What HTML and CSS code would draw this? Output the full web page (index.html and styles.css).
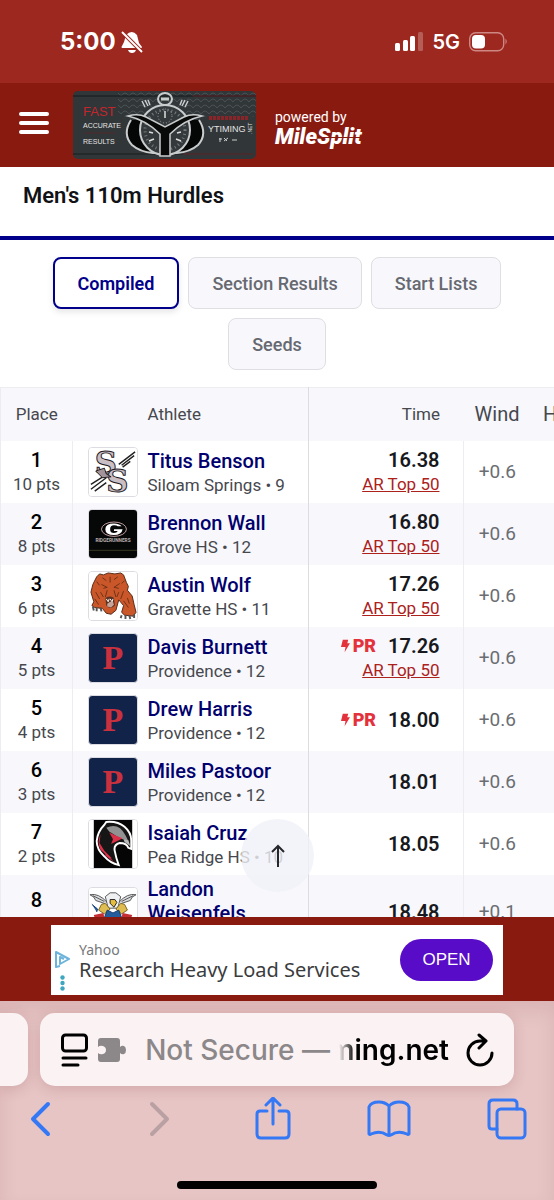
FILE: index.html
```html
<!DOCTYPE html>
<html lang="en">
<head>
    <meta charset="UTF-8">
    <meta name="viewport" content="width=device-width, initial-scale=1.0">
    <title>Men's 110m Hurdles</title>
    <link rel="stylesheet" href="styles.css">
</head>
<body>

    <div class="status-bar">
        <div class="status-left">
            <span class="clock">5:00</span>
            <svg width="22" height="22" viewBox="0 0 22 22" fill="#fff">
                <path d="M5 4q6-6 11 0l2 8 3 4q0 1-1 1H1q-1-1 0-2l2-4zM7 19h8q-1 3-4 3t-4-3z"/>
                <path d="M1 1l20 20" stroke="#9c2820" stroke-width="4"/>
                <path d="M1 1l20 20" stroke="#fff" stroke-width="2"/>
            </svg>
        </div>
        <div class="status-right">
            <svg width="28" height="20" viewBox="0 0 28 20" fill="#fff">
                <rect y="11" width="5" height="8" rx="1.500"/>
                <rect x="8" y="8" width="5" height="11" rx="1.500"/>
                <rect x="15" y="4" width="5" height="15" rx="1.500"/>
                <rect x="23" y="0" width="5" height="19" rx="1.500" opacity=".25"/>
            </svg>
            <span class="network">5G</span>
            <svg width="39" height="20" viewBox="0 0 39 20">
                <rect x=".7" y=".7" width="34" height="18" rx="6" fill="none" stroke="#cf8783" stroke-width="1.400"/>
                <rect x="3" y="3" width="13" height="13.500" rx="4" fill="#fff"/>
                <path d="M36.500 6.500q2.500 3 0 6z" fill="#cf8783"/>
            </svg>
        </div>
    </div>

    <header>
        <button class="menu-btn" aria-label="Menu"><span></span><span></span><span></span></button>
        <a href="#" class="banner" aria-label="YTiming">
            <svg width="183" height="68" viewBox="0 0 183 68">
                <defs>
                    <pattern id="mesh" width="8" height="6" patternUnits="userSpaceOnUse">
                        <path d="M0 5q4-6 8 0" fill="none" stroke="#4a5153"/>
                    </pattern>
                </defs>
                <rect width="183" height="68" rx="5" fill="#313638"/>
                <rect x="45" y="0" width="138" height="26" fill="url(#mesh)"/>
                <path d="M0 5h183" stroke="#15181a"/>
                <path d="M120 5h63M110 63h70" stroke="#5e2327"/>
                <path d="M0 63h110" stroke="#191c1d"/>
                <g font-family="Liberation Sans" fill="#e4e4e4">
                    <text x="10" y="25" font-size="13" fill="#c3272d">FAST</text>
                    <text x="10" y="37" font-size="7">ACCURATE</text>
                    <text x="10" y="53" font-size="7">RESULTS</text>
                    <text x="135" y="41" font-size="9">YTIMING</text>
                    <text x="179" y="43" font-size="5" transform="rotate(-90 179 43)">.NET</text>
                </g>
                <path d="M136 27h39" stroke="#8c2329" stroke-width="4" stroke-dasharray="3 1"/>
                <path d="M12 42h30" stroke="#54282b"/>
                <path d="M147 47v4M146 48h3M151 50l4-3M151 47l3 3M159 49h5" stroke="#ccc"/>
                <!-- stopwatch -->
                <g fill="none" stroke="#c9cccd">
                    <ellipse cx="92" cy="8" rx="7" ry="6" stroke-width="2"/>
                    <path d="M88 8h8" stroke-width="3"/>
                    <path d="M69 10l3 6M72 9l3 6M75 9l2 5M115 10l-3 6M112 9l-3 6M109 9l-2 5" stroke-width="1.500"/>
                    <path d="M58 29q-9 14 1 25 8 7 21 8l24 0q13-1 21-8 10-11 1-25" fill="#050606" stroke-width="2"/>
                    <circle cx="92" cy="39" r="25" fill="#34393b" stroke-width="2"/>
                    <circle cx="92" cy="39" r="20" stroke="#777c7f" stroke-width="3" stroke-dasharray="1 3"/>
                    <circle cx="92" cy="25" r="7" stroke="#a5a9aa" stroke-dasharray="1 2"/>
                    <path d="M92 20v7M76 41l4 1M104 42l4-1M76 50l5-2M108 50l-5-2" stroke="#ddd" stroke-width="1.500"/>
                    <path d="M55 25q10-3 18 1l19 10 19-10q8-4 18-1-18 4-32 18v22H87V43Q73 29 55 25z" fill="#080909" stroke-width="1.500"/>
                </g>
            </svg>
        </a>
        <div class="powered">
            <span>powered by</span>
            <a href="#" class="milesplit">MileSplit</a>
        </div>
    </header>

    <section class="event-title">
        <h1>Men's 110m Hurdles</h1>
    </section>

    <nav class="tabs">
        <button class="tab active">Compiled</button>
        <button class="tab">Section Results</button>
        <button class="tab">Start Lists</button>
        <button class="tab">Seeds</button>
    </nav>

    <main class="results">
        <table>
            <colgroup>
                <col class="col-place">
                <col class="col-logo">
                <col>
                <col class="col-time">
                <col class="col-wind">
                <col class="col-heat">
            </colgroup>
            <thead>
                <tr>
                    <th>Place</th>
                    <th></th>
                    <th class="athlete">Athlete</th>
                    <th class="time">Time</th>
                    <th class="wind">Wind</th>
                    <th class="heat">Heat</th>
                </tr>
            </thead>
            <tbody>
                <tr>
                    <td class="place"><b>1</b><span>10 pts</span></td>
                    <td class="logo">
                        <svg viewBox="0 0 50 50">
                            <rect width="50" height="50" fill="#fff"/>
                            <path d="M31 17l17-13M34 18l13-10M35 20l8-6M2 38l14-9M2 43l16-12M6 45l12-9" stroke="#222" stroke-width="1.500"/>
                            <g class="siloam-s">
                                <text x="6" y="27">S</text>
                                <text x="18" y="46">S</text>
                            </g>
                            <path d="M7 24l9-3 2 6 5 3-9 1z" fill="#a3949c" stroke="#1c181b"/>
                        </svg>
                    </td>
                    <td class="athlete"><a href="#">Titus Benson</a><span>Siloam Springs • 9</span></td>
                    <td class="time"><b>16.38</b><a href="#">AR Top 50</a></td>
                    <td class="wind">+0.6</td>
                    <td></td>
                </tr>
                <tr>
                    <td class="place"><b>2</b><span>8 pts</span></td>
                    <td class="logo">
                        <svg viewBox="0 0 50 50">
                            <rect width="50" height="50" fill="#060707"/>
                            <ellipse cx="26" cy="20" rx="13" ry="7.500" fill="none" stroke="#c9a4a4"/>
                            <path d="M34 17q-3-3-8-3-9 0-9 6t9 6q8 0 9-6h-9v2h4q-1 2-4 2-4 0-4-4t4-4q3 0 4 1z" fill="#fff"/>
                            <text x="25" y="33" text-anchor="middle" font-size="5" font-weight="bold" fill="#b9b0b0">RIDGERUNNERS</text>
                            <path d="M0 42h50" stroke="#3c3a24"/>
                        </svg>
                    </td>
                    <td class="athlete"><a href="#">Brennon Wall</a><span>Grove HS • 12</span></td>
                    <td class="time"><b>16.80</b><a href="#">AR Top 50</a></td>
                    <td class="wind">+0.6</td>
                    <td></td>
                </tr>
                <tr>
                    <td class="place"><b>3</b><span>6 pts</span></td>
                    <td class="logo">
                        <svg viewBox="0 0 50 50">
                            <rect width="50" height="50" fill="#fff"/>
                            <path d="M8 5l3-3 4 1 5-2 7 1 6-1 3 2 3 8 2 4-1 4 5 6 2 9 2 8-3 4-9-1-3-3 2-7-5-6-3 11-5 4-5-1-4-5-8-1-3-2 2-4-3-10 2-8z" fill="#c9572a" stroke="#542816"/>
                            <path d="M13 13l6 3-4 1M32 12l-6 4 5 1M7 21l4 7M36 20l-3 8M19 19l-2 7M26 19l2 7M8 10l3 4M37 9l-3 3M14 6l4 3M30 5l-4 3M36 30l5 7M6 28l4 6M22 5v6M12 21l3 5M31 21l-2 5M40 27l2 6" stroke="#6d3016" fill="none"/>
                            <path d="M17 27q5-3 9 0l1 8q-5 5-9 0z" fill="#5b3223"/>
                            <path d="M19 33l3-2 3 0 1 3-3 3-4-1z" fill="#c7a49a"/>
                            <path d="M18 28l2 3 1-3M25 28l-1 3-2-3" stroke="#fff" fill="none"/>
                            <path d="M4 36l1 4M8 37l0 4M12 37l1 4M34 45l-1 3M38 45v4M42 45l1 4M47 44v4" stroke="#555" stroke-width="2"/>
                        </svg>
                    </td>
                    <td class="athlete"><a href="#">Austin Wolf</a><span>Gravette HS • 11</span></td>
                    <td class="time"><b>17.26</b><a href="#">AR Top 50</a></td>
                    <td class="wind">+0.6</td>
                    <td></td>
                </tr>
                <tr>
                    <td class="place"><b>4</b><span>5 pts</span></td>
                    <td class="logo"><div class="providence">P</div></td>
                    <td class="athlete"><a href="#">Davis Burnett</a><span>Providence • 12</span></td>
                    <td class="time"><b><span class="pr"><svg width="9" height="14" viewBox="0 0 10 14"><path d="M2 0h6L7 4h3L4 14l1-6H0z"/></svg>PR</span>17.26</b><a href="#">AR Top 50</a></td>
                    <td class="wind">+0.6</td>
                    <td></td>
                </tr>
                <tr>
                    <td class="place"><b>5</b><span>4 pts</span></td>
                    <td class="logo"><div class="providence">P</div></td>
                    <td class="athlete"><a href="#">Drew Harris</a><span>Providence • 12</span></td>
                    <td class="time"><b><span class="pr"><svg width="9" height="14" viewBox="0 0 10 14"><path d="M2 0h6L7 4h3L4 14l1-6H0z"/></svg>PR</span>18.00</b></td>
                    <td class="wind">+0.6</td>
                    <td></td>
                </tr>
                <tr>
                    <td class="place"><b>6</b><span>3 pts</span></td>
                    <td class="logo"><div class="providence">P</div></td>
                    <td class="athlete"><a href="#">Miles Pastoor</a><span>Providence • 12</span></td>
                    <td class="time"><b>18.01</b></td>
                    <td class="wind">+0.6</td>
                    <td></td>
                </tr>
                <tr>
                    <td class="place"><b>7</b><span>2 pts</span></td>
                    <td class="logo">
                        <svg viewBox="0 0 50 50">
                            <rect width="50" height="50" fill="#fff"/>
                            <rect x="5" width="40" height="50" fill="#050505"/>
                            <path d="M16 5l2-3q12-1 19 5 7 6 7 14v9l-3-1q-2-5-9-5-7 2-5 9 1 6 4 14-9-2-15-9Q8 31 8 22q1-10 8-17z" fill="#161616" stroke="#fff" stroke-width="2"/>
                            <path d="M18 8q13-6 20 8l3 6-9-3-11-7z" fill="#929292"/>
                            <path d="M21 13l6 3 8 3-4 2-8 4 2-5zM12 15l-1 9 5 8 8 8-3-1-9-8q-4-8 0-16zM17 33l9 11-9-7z" fill="#dc3048"/>
                            <path d="M36 20l5 1 2 6-6-4z" fill="#bbb"/>
                        </svg>
                    </td>
                    <td class="athlete"><a href="#">Isaiah Cruz</a><span>Pea Ridge HS • 10</span></td>
                    <td class="time"><b>18.05</b></td>
                    <td class="wind">+0.6</td>
                    <td></td>
                </tr>
                <tr>
                    <td class="place"><b>8</b><span>1 pt</span></td>
                    <td class="logo">
                        <svg viewBox="0 0 50 50">
                            <rect width="50" height="50" fill="#fff"/>
                            <path d="M19 15Q10 5 1 7q5 2 6 6l9 3M31 15Q40 5 49 7q-5 2-6 6l-9 3M4 8l12 6M46 8l-12 6" fill="#d9dcdf" stroke="#555"/>
                            <path d="M17 9l5-4h6l5 4-3 12H20z" fill="#eef0f2" stroke="#555"/>
                            <path d="M22 12h5l2 3-3 5-4-4z" fill="#e6bd3d" stroke="#222"/>
                            <path d="M13 17l4-1 5 6-6 5-6-4zM37 17l-4-1-5 6 6 5 6-4z" fill="#e0bd50" stroke="#776126"/>
                            <path d="M19 23l6 3 6-3 3 8-9 3-9-3zM3 17l6 5-1 3" fill="#245d9d" stroke="#183d70"/>
                            <path d="M5 28l10-2 2 9h16l2-9 10 2-3 10H8z" fill="#c52e35"/>
                        </svg>
                    </td>
                    <td class="athlete"><a href="#">Landon Weisenfels</a><span>Bentonville • 11</span></td>
                    <td class="time"><b>18.48</b></td>
                    <td class="wind">+0.1</td>
                    <td></td>
                </tr>
            </tbody>
        </table>
        <button class="to-top" aria-label="Back to top">
            <svg width="16" height="24" viewBox="0 0 16 24" fill="none" stroke="#25272c" stroke-width="2">
                <path d="M8 23V2M2 8l6-6 6 6"/>
            </svg>
        </button>
    </main>

    <aside class="ad-bar">
        <div class="ad">
            <div class="ad-marks">
                <svg width="15" height="17" viewBox="0 0 15 17" fill="none" stroke="#6cb4da" stroke-width="2" stroke-linejoin="round">
                    <path d="M5 15l-4 1V1l13 7-9 5V6l4 2"/>
                </svg>
                <svg width="5" height="16" viewBox="0 0 5 16" fill="#3ea6bf">
                    <circle cx="2.500" cy="2.500" r="2.200"/>
                    <circle cx="2.500" cy="8" r="2.200"/>
                    <circle cx="2.500" cy="13.500" r="2.200"/>
                </svg>
            </div>
            <div class="ad-text">
                <span>Yahoo</span>
                <p>Research Heavy Load Services</p>
            </div>
            <button class="ad-open">OPEN</button>
        </div>
    </aside>

    <footer class="browser-bar">
        <div class="address-row">
            <div class="prev-tab"></div>
            <button class="address">
                <svg width="27" height="34" viewBox="0 0 27 34" fill="none" stroke="#000" stroke-width="3" stroke-linecap="round">
                    <rect x="1.500" y="2" width="24" height="16" rx="3"/>
                    <path d="M2 25h23M2 32h15"/>
                </svg>
                <svg class="puzzle" width="28" height="24" viewBox="0 0 28 24" fill="#8c8789">
                    <path d="M3 0h16q3 0 3 3v6q2-2 4-1 2 1 2 4t-2 4q-2 1-4-1v6q0 3-3 3H3q-3 0-3-3v-6q2 2 5 1 3-1 3-4t-3-4Q2 7 0 9V3q0-3 3-3z"/>
                </svg>
                <span class="insecure">Not Secure —</span>
                <span class="domain">ming.net</span>
                <svg class="reload" width="28" height="34" viewBox="0 0 28 34" fill="none" stroke="#000" stroke-width="3" stroke-linecap="round" stroke-linejoin="round">
                    <path d="M26 20a12 12 0 1 1-12-12h5M13 2l7 6-7 7"/>
                </svg>
            </button>
        </div>
        <div class="toolbar">
            <button aria-label="Back"><svg width="40" height="44" viewBox="0 0 40 44"><path d="M28 7L13 22l15 15" stroke-width="4"/></svg></button>
            <button aria-label="Forward" class="disabled"><svg width="40" height="44" viewBox="0 0 40 44"><path d="M16 7l15 15-15 15" stroke-width="4"/></svg></button>
            <button aria-label="Share"><svg width="40" height="44" viewBox="0 0 40 44"><path d="M15 14H8q-3 0-3 3v20q0 4 4 4h24q4 0 4-4V17q0-3-3-3h-7M21 27V2M14 8l7-7 7 7"/></svg></button>
            <button aria-label="Bookmarks"><svg width="44" height="44" viewBox="0 0 44 44"><path d="M22 9q-4-4-10-4-8 0-10 5v27q1 1 2 0 9-4 16 1 2 1 4 0 7-5 16-1 1 1 2 0V10q-2-5-10-5-6 0-10 4v29"/></svg></button>
            <button aria-label="Tabs"><svg width="40" height="44" viewBox="0 0 40 44"><rect x="10" y="12" width="28" height="29" rx="4"/><path d="M10 32H5q-3 0-3-3V7q0-4 4-4h20q4 0 4 4v5"/></svg></button>
        </div>
        <div class="home-indicator"></div>
    </footer>

</body>
</html>
```
FILE: styles.css
```css
* {
    box-sizing: border-box;
}

body {
    font-family: Roboto, Arial, sans-serif;
    margin: 0;
    height: 100vh;
    display: flex;
    flex-direction: column;
    overflow: hidden;
    background-color: white;
}

button {
    font-family: inherit;
    border: none;
    background: none;
    padding: 0;
    cursor: pointer;
}

svg {
    display: block;
}

/* Status bar */
.status-bar {
    display: flex;
    justify-content: space-between;
    align-items: center;
    padding: 26px 46px 26px 60px;
    font-family: Inter, sans-serif;
    color: white;
    background-color: #9c2820;
}

.status-left {
    display: flex;
    align-items: center;
    gap: 5px;
}

.status-right {
    display: flex;
    align-items: center;
    gap: 9px;
}

.clock {
    font-size: 24px;
    font-weight: 700;
    line-height: 31px;
}

.network {
    font-size: 20px;
    font-weight: 600;
}

/* Site header */
header {
    display: flex;
    align-items: center;
    padding: 8px 19px;
    background-color: #891a10;
}

.menu-btn {
    display: flex;
    flex-direction: column;
    gap: 5px;
    width: 30px;
    margin-right: 24px;
    padding-bottom: 4px;
}

.menu-btn span {
    height: 4px;
    border-radius: 2px;
    background-color: white;
}

.banner {
    margin-right: 19px;
}

.powered {
    display: flex;
    flex-direction: column;
    color: white;
    font-size: 14px;
    line-height: 20px;
    padding-top: 4px;
}

.milesplit {
    position: relative;
    color: white;
    font-size: 22px;
    font-weight: 900;
    font-style: italic;
    text-decoration: none;
}

/* the cut through "Split" */
.milesplit::after {
    content: "";
    position: absolute;
    left: 50%;
    right: 0;
    top: 50%;
    height: 1px;
    background-color: #891a10;
}

.event-title {
    padding: 14px 23px 26px;
    border-bottom: 4px solid #00008b;
}

.event-title h1 {
    margin: 0;
    font-size: 22px;
    font-weight: 600;
    line-height: 29px;
    color: #111216;
}

/* Tabs */
.tabs {
    display: flex;
    flex-wrap: wrap;
    justify-content: center;
    gap: 9px;
    padding: 17px 50px;
}

.tab {
    height: 52px;
    padding: 0 23px;
    font-size: 18px;
    font-weight: 500;
    color: #666970;
    background-color: #f7f7fc;
    border: 1px solid #dfdfe3;
    border-radius: 8px;
}

.tab.active {
    font-weight: 600;
    color: #00008b;
    background-color: white;
    border: 2px solid #00008b;
    box-shadow: 0 3px 6px rgba(0, 0, 0, 0.1);
}

/* Results table */
.results {
    position: relative;
    flex: 1;
    min-height: 0;
    overflow: hidden;
}

table {
    width: calc(100% + 40px);
    table-layout: fixed;
    border-collapse: collapse;
    border-left: 1px solid #ececf1;
    color: #46484e;
}

.col-place { width: 72px; }
.col-logo { width: 75px; }
.col-time { width: 155px; }
.col-wind { width: 68px; }
.col-heat { width: 63px; }

th,
td {
    padding: 0;
    font-size: 17px;
    font-weight: 400;
    line-height: 24px;
    text-align: center;
}

thead tr {
    height: 53px;
    background-color: #f7f7fc;
    border-top: 1px solid #ececf1;
}

tbody tr {
    height: 62px;
}

tbody tr:nth-child(even) {
    background-color: #f7f7fc;
}

td b,
td span,
td a {
    display: block;
}

td b {
    font-size: 20px;
}

.place {
    border-right: 1px solid #ececf1;
}

.place b {
    font-weight: 500;
    color: black;
}

.logo svg,
.providence {
    width: 50px;
    height: 50px;
    margin-left: 15px;
    border: 1px solid #dcdce2;
    border-radius: 4px;
}

.siloam-s {
    font-family: "DejaVu Serif", serif;
    font-size: 32px;
    font-weight: bold;
    fill: #cbbfc6;
    stroke: #1c181b;
    stroke-width: 1px;
}

.providence {
    font-family: "Liberation Serif", serif;
    font-size: 34px;
    font-weight: bold;
    line-height: 48px;
    color: #c9313f;
    background-color: #112348;
}

.athlete {
    text-align: left;
    border-right: 1px solid #dcdce2;
}

td.athlete {
    padding-top: 2px;
}

.athlete a {
    font-size: 20px;
    font-weight: 500;
    color: #00006e;
    text-decoration: none;
}

.time {
    text-align: right;
    padding-right: 23px;
}

tbody .time {
    border-right: 1px solid #ececf1;
}

.time b {
    display: flex;
    justify-content: flex-end;
    align-items: center;
    gap: 12px;
    font-weight: 600;
    color: #17191d;
}

.time a {
    color: #ac211b;
}

.time .pr {
    display: flex;
    align-items: center;
    gap: 3px;
    font-size: 18px;
    font-weight: 900;
    color: #e3323b;
}

.pr svg {
    fill: #e3323b;
}

.wind,
.heat {
    font-size: 20px;
}

td.wind {
    font-size: 19px;
    color: #6b6d72;
}

.heat {
    text-align: left;
    padding-left: 12px;
}

.to-top {
    position: absolute;
    left: 50%;
    bottom: 25px;
    width: 73px;
    height: 73px;
    margin-left: -36px;
    display: flex;
    justify-content: center;
    align-items: center;
    border-radius: 50%;
    background-color: rgba(240, 241, 247, 0.8);
}

/* Ad */
.ad-bar {
    padding: 8px 51px 6px;
    background-color: #891a10;
}

.ad {
    display: flex;
    align-items: center;
    height: 70px;
    padding: 0 10px 0 4px;
    background-color: white;
}

.ad-marks {
    display: flex;
    flex-direction: column;
    align-items: center;
    gap: 7px;
    margin-right: 9px;
    padding-top: 22px;
}

.ad-text {
    flex: 1;
    font-family: "Noto Sans", sans-serif;
    color: #75777a;
    font-size: 14px;
    line-height: 20px;
}

.ad-text p {
    margin: 0;
    color: #3b3c3e;
    font-size: 20px;
    white-space: nowrap;
}

.ad-open {
    width: 93px;
    height: 42px;
    border-radius: 21px;
    font-family: "Liberation Sans", Arial, sans-serif;
    font-size: 17px;
    color: white;
    background-color: #580cc8;
}

/* Browser bar */
.browser-bar {
    padding: 12px 0 11px;
    background-color: #e7c5c5;
    box-shadow: inset 0 10px 18px rgba(120, 40, 40, 0.1);
}

.address-row {
    display: flex;
    gap: 12px;
    padding-right: 40px;
}

.prev-tab {
    width: 28px;
    border-radius: 0 15px 15px 0;
    background-color: #faf2f3;
    box-shadow: 0 3px 14px rgba(110, 40, 40, 0.18);
}

.address {
    flex: 1;
    display: flex;
    align-items: center;
    height: 73px;
    padding: 0 20px 0 21px;
    border-radius: 15px;
    background-color: #faf2f3;
    box-shadow: 0 3px 14px rgba(110, 40, 40, 0.18);
    font-family: Inter, sans-serif;
    font-size: 28px;
    font-weight: 500;
    white-space: nowrap;
}

.puzzle {
    margin-left: 10px;
}

.insecure {
    margin-left: auto;
    color: #8c8789;
}

.domain {
    display: flex;
    justify-content: flex-end;
    width: 110px;
    margin-left: 9px;
    overflow: hidden;
    font-weight: 600;
    color: black;
    mask-image: linear-gradient(to right, transparent, black 16px);
}

.reload {
    margin-left: 17px;
}

.toolbar {
    display: flex;
    justify-content: space-between;
    padding: 11px 27px 40px 20px;
}

.toolbar svg {
    fill: none;
    stroke: #3478f6;
    stroke-width: 3px;
    stroke-linecap: round;
    stroke-linejoin: round;
}

.toolbar .disabled svg {
    stroke: #b9a0a2;
}

.home-indicator {
    width: 36%;
    height: 8px;
    margin: 0 auto;
    border-radius: 4px;
    background-color: black;
}
```
